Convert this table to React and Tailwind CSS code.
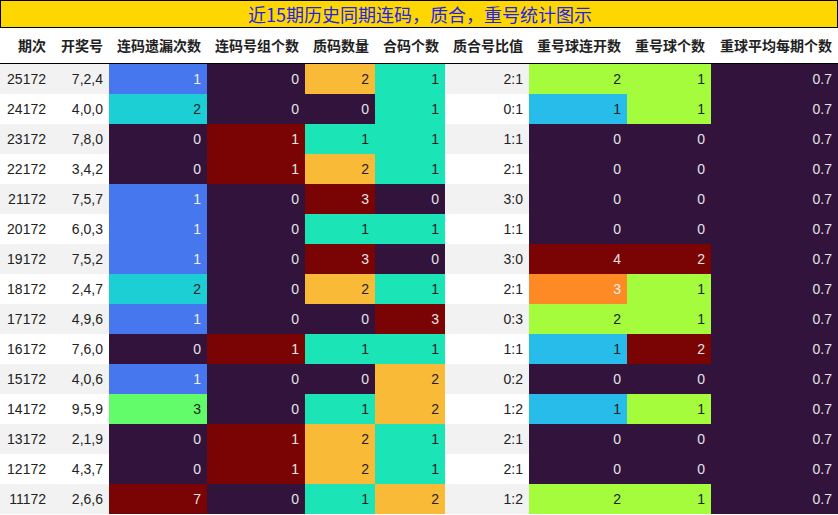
const C = {
  p: "bg-[#32133b] text-[#e4e4e4]",
  r: "bg-[#7a0403] text-[#e4e4e4]",
  b: "bg-[#4777ef] text-[#f0f0f0]",
  c: "bg-[#1bcfd4] text-[#222]",
  t: "bg-[#1be4b6] text-[#222]",
  g: "bg-[#62fc6b] text-[#222]",
  l: "bg-[#a4fc3c] text-[#222]",
  y: "bg-[#f9ba38] text-[#222]",
  s: "bg-[#28bceb] text-[#222]",
  o: "bg-[#fe8a26] text-[#f0f0f0]",
};

const headers = [
  "期次",
  "开奖号",
  "连码遗漏次数",
  "连码号组个数",
  "质码数量",
  "合码个数",
  "质合号比值",
  "重号球连开数",
  "重号球个数",
  "重球平均每期个数",
];

// [期次, 开奖号, 遗漏, 号组, 质码, 合码, 比值, 连开, 重号]  value:color
const rows = [
  ["25172", "7,2,4", "1b", "0p", "2y", "1t", "2:1", "2l", "1l"],
  ["24172", "4,0,0", "2c", "0p", "0p", "1t", "0:1", "1s", "1l"],
  ["23172", "7,8,0", "0p", "1r", "1t", "1t", "1:1", "0p", "0p"],
  ["22172", "3,4,2", "0p", "1r", "2y", "1t", "2:1", "0p", "0p"],
  ["21172", "7,5,7", "1b", "0p", "3r", "0p", "3:0", "0p", "0p"],
  ["20172", "6,0,3", "1b", "0p", "1t", "1t", "1:1", "0p", "0p"],
  ["19172", "7,5,2", "1b", "0p", "3r", "0p", "3:0", "4r", "2r"],
  ["18172", "2,4,7", "2c", "0p", "2y", "1t", "2:1", "3o", "1l"],
  ["17172", "4,9,6", "1b", "0p", "0p", "3r", "0:3", "2l", "1l"],
  ["16172", "7,6,0", "0p", "1r", "1t", "1t", "1:1", "1s", "2r"],
  ["15172", "4,0,6", "1b", "0p", "0p", "2y", "0:2", "0p", "0p"],
  ["14172", "9,5,9", "3g", "0p", "1t", "2y", "1:2", "1s", "1l"],
  ["13172", "2,1,9", "0p", "1r", "2y", "1t", "2:1", "0p", "0p"],
  ["12172", "4,3,7", "0p", "1r", "2y", "1t", "2:1", "0p", "0p"],
  ["11172", "2,6,6", "7r", "0p", "1t", "2y", "1:2", "2l", "1l"],
];

const grid =
  "grid grid-cols-[52px_57px_98px_98px_70px_70px_84px_98px_84px_127px]";

function Cell({ className, children }) {
  return (
    <div className={`h-[30px] flex items-center justify-end pr-[6px] ${className}`}>
      {children}
    </div>
  );
}

export default function App() {
  return (
    <div className="w-[838px] h-[515px] bg-white overflow-hidden font-['Liberation_Sans','Noto_Sans_CJK_SC',sans-serif] text-[14px]">
      {/* TITLE */}
      <div className="h-[28px] bg-[#ffd700] border border-black flex items-center justify-center">
        <span className="text-[18px] text-[#2424e8] font-['Noto_Sans_CJK_SC',sans-serif] leading-none pl-[2px]">
          近15期历史同期连码，质合，重号统计图示
        </span>
      </div>

      {/* HEADER */}
      <div className={`${grid} h-[36px] border-b border-black`}>
        {headers.map((h) => (
          <div
            key={h}
            className="flex items-center justify-end pr-[6px] font-bold text-[#222] font-['Noto_Sans_CJK_SC',sans-serif] whitespace-nowrap"
          >
            {h}
          </div>
        ))}
      </div>

      {/* ROWS */}
      {rows.map((r, i) => {
        const stripe = i % 2 === 0 ? "bg-[#f2f2f2] text-[#222]" : "bg-white text-[#222]";
        return (
          <div key={r[0]} className={grid}>
            <Cell className={stripe}>{r[0]}</Cell>
            <Cell className={stripe}>{r[1]}</Cell>
            {r.slice(2, 6).map((v, j) => (
              <Cell key={j} className={C[v[1]]}>
                {v[0]}
              </Cell>
            ))}
            <Cell className={stripe}>{r[6]}</Cell>
            {r.slice(7, 9).map((v, j) => (
              <Cell key={j} className={C[v[1]]}>
                {v[0]}
              </Cell>
            ))}
            <Cell className={C.p}>0.7</Cell>
          </div>
        );
      })}
    </div>
  );
}
